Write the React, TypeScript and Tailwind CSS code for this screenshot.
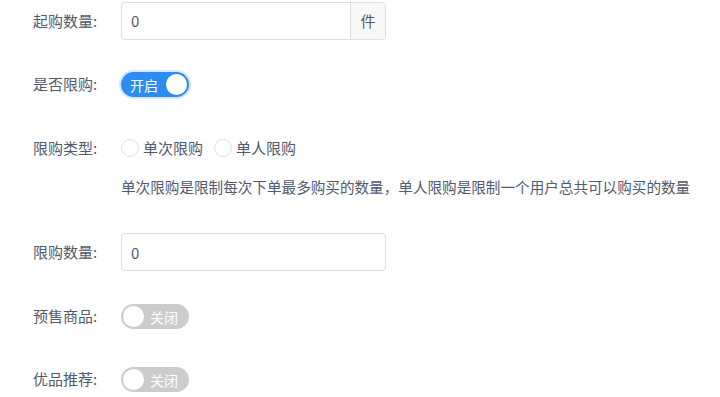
import React, { useState } from 'react';

const labelCls = 'w-[121px] shrink-0 pl-[33px] text-[15px] text-[#515a6e]';

const Switch: React.FC<{ on: boolean; onText: string; offText: string; onToggle: () => void }> = ({ on, onText, offText, onToggle }) => (
  <button
    onClick={onToggle}
    className={`relative flex h-[25px] w-[68px] items-center rounded-full text-[14px] text-white ${
      on ? 'bg-[#2d8cf0] shadow-[0_0_0_2px_rgba(45,140,240,0.2)]' : 'bg-[#cccccc]'
    }`}
  >
    {on ? (
      <>
        <span className="ml-[9px] leading-none">{onText}</span>
        <span className="absolute right-[2px] top-[2px] h-[21px] w-[21px] rounded-full bg-white" />
      </>
    ) : (
      <>
        <span className="absolute left-[2px] top-[2px] h-[21px] w-[21px] rounded-full bg-white" />
        <span className="ml-[29px] leading-none">{offText}</span>
      </>
    )}
  </button>
);

const Radio: React.FC<{ label: string; checked: boolean; onClick: () => void }> = ({ label, checked, onClick }) => (
  <label onClick={onClick} className="flex cursor-pointer items-center gap-[4px]">
    <span className="flex h-[18px] w-[18px] items-center justify-center rounded-full border border-[#dcdee2] bg-white">
      {checked && <span className="h-[8px] w-[8px] rounded-full bg-[#2d8cf0]" />}
    </span>
    <span className="text-[15px] text-[#515a6e]">{label}</span>
  </label>
);

export default function App() {
  const [limit, setLimit] = useState(true);
  const [presale, setPresale] = useState(false);
  const [recommend, setRecommend] = useState(false);
  const [type, setType] = useState('');

  return (
    <div className="h-[397px] w-[720px] overflow-hidden bg-white" style={{ fontFamily: '"Noto Sans CJK SC", "Noto Sans", sans-serif' }}>
      {/* 起购数量 */}
      <div className="mt-[2px] flex h-[38px] items-center">
        <div className={labelCls}>起购数量:</div>
        <div className="flex h-[38px] w-[265px] overflow-hidden rounded border border-[#dcdee2]">
          <input defaultValue="0" className="min-w-0 flex-1 px-[9px] text-[15px] text-[#515a6e] outline-none" />
          <div className="flex w-[35px] items-center justify-center border-l border-[#dcdee2] bg-[#f8f8f9] text-[15px] text-[#515a6e]">件</div>
        </div>
      </div>

      {/* 是否限购 */}
      <div className="mt-[32px] flex h-[25px] items-center">
        <div className={labelCls}>是否限购:</div>
        <Switch on={limit} onText="开启" offText="关闭" onToggle={() => setLimit(!limit)} />
      </div>

      {/* 限购类型 */}
      <div className="mt-[41px] flex h-[20px] items-center">
        <div className={labelCls}>限购类型:</div>
        <div className="flex items-center gap-[11px]">
          <Radio label="单次限购" checked={type === 'once'} onClick={() => setType('once')} />
          <Radio label="单人限购" checked={type === 'user'} onClick={() => setType('user')} />
        </div>
      </div>
      <div className="mt-[19px] h-[20px] pl-[121px] text-[14.6px] leading-[20px] text-[#515a6e] whitespace-nowrap">
        单次限购是限制每次下单最多购买的数量，单人限购是限制一个用户总共可以购买的数量
      </div>

      {/* 限购数量 */}
      <div className="mt-[36px] flex h-[38px] items-center">
        <div className={labelCls}>限购数量:</div>
        <input defaultValue="0" className="h-[38px] w-[265px] rounded border border-[#dcdee2] px-[9px] text-[15px] text-[#515a6e] outline-none" />
      </div>

      {/* 预售商品 */}
      <div className="mt-[33px] flex h-[25px] items-center">
        <div className={labelCls}>预售商品:</div>
        <Switch on={presale} onText="开启" offText="关闭" onToggle={() => setPresale(!presale)} />
      </div>

      {/* 优品推荐 */}
      <div className="mt-[38px] flex h-[25px] items-center">
        <div className={labelCls}>优品推荐:</div>
        <Switch on={recommend} onText="开启" offText="关闭" onToggle={() => setRecommend(!recommend)} />
      </div>
    </div>
  );
}
